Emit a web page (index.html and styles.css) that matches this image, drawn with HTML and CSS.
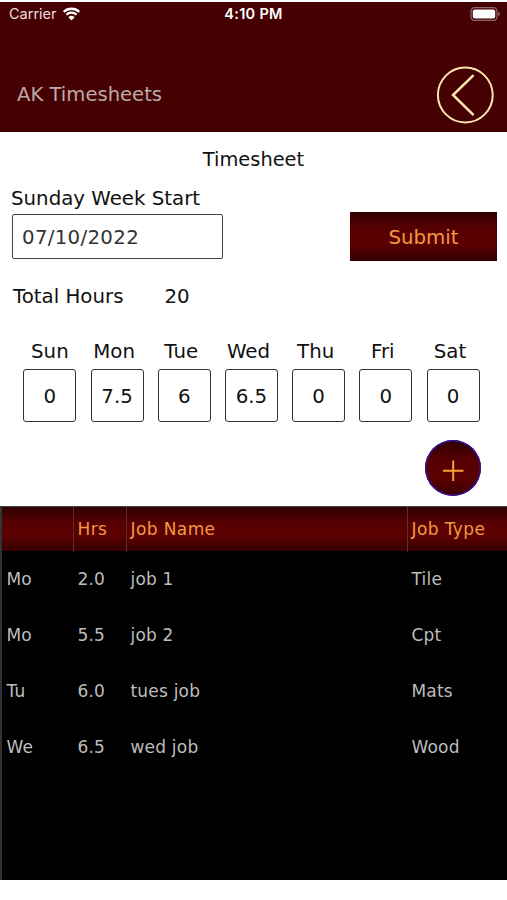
FILE: index.html
```html
<!DOCTYPE html>
<html lang="en">
	<head>
		<meta charset="utf-8">
		<title>AK Timesheets</title>
		<link rel="stylesheet" href="styles.css">
	</head>
	<body>

		<header class="header">
			<div class="status-bar">
				<div class="status-carrier">
					<span class="carrier-name">Carrier</span>
					<svg class="wifi-icon" width="19" height="14" viewBox="0 0 18 14">
						<path d="M1.2 4.9a11.2 11.2 0 0 1 15.6 0M3.9 7.8a7.3 7.3 0 0 1 10.2 0" fill="none" stroke="#fff" stroke-width="2.3"/>
						<path d="M5.9 10.2a4.5 4.5 0 0 1 6.2 0L9 13.4z" fill="#fff"/>
					</svg>
				</div>
				<span class="status-time">4:10 PM</span>
				<svg class="battery-icon" width="31" height="14" viewBox="0 0 31 14">
					<rect x="1" y=".7" width="26" height="12.6" rx="3.6" fill="none" stroke="#95696c" stroke-width="1.2"/>
					<rect x="2.8" y="2.5" width="22.4" height="9" rx="2" fill="#fff"/>
					<path d="M28.3 4.8v4.4c2.2-.8 2.2-3.6 0-4.4z" fill="#95696c"/>
				</svg>
			</div>
			<div class="title-bar">
				<h1 class="app-title">AK Timesheets</h1>
				<button class="back-button" type="button" aria-label="Back">
					<svg width="58" height="58" viewBox="0 0 58 58" fill="none" stroke="#ffe5ac">
						<circle cx="29.3" cy="29" r="27.4" stroke-width="2"/>
						<path d="M37.6 9.1L17 29l20.6 20.2" stroke-width="2.5"/>
					</svg>
				</button>
			</div>
		</header>

		<main class="timesheet">
			<h2 class="page-title">Timesheet</h2>

			<div class="week-row">
				<div class="week-field">
					<label class="week-label" for="week-start">Sunday Week Start</label>
					<input class="week-input" id="week-start" type="text" value="07/10/2022">
				</div>
				<button class="submit-button" type="button">Submit</button>
			</div>

			<div class="total-row">
				<span class="total-label">Total Hours</span>
				<span class="total-value">20</span>
			</div>

			<div class="days">
				<div class="day"><span class="day-name">Sun</span><div class="day-hours">0</div></div>
				<div class="day"><span class="day-name">Mon</span><div class="day-hours">7.5</div></div>
				<div class="day"><span class="day-name">Tue</span><div class="day-hours">6</div></div>
				<div class="day"><span class="day-name">Wed</span><div class="day-hours">6.5</div></div>
				<div class="day"><span class="day-name">Thu</span><div class="day-hours">0</div></div>
				<div class="day"><span class="day-name">Fri</span><div class="day-hours">0</div></div>
				<div class="day"><span class="day-name">Sat</span><div class="day-hours">0</div></div>
			</div>

			<div class="add-row">
				<button class="add-button" type="button" aria-label="Add job">
					<svg width="56" height="56" viewBox="0 0 56 56">
						<path d="M28.2 20.5v20.5M18 30.8h20.4" stroke="#f9a03c" stroke-width="2"/>
					</svg>
				</button>
			</div>
		</main>

		<section class="jobs">
			<div class="jobs-row jobs-head">
				<span></span>
				<span>Hrs</span>
				<span>Job Name</span>
				<span>Job Type</span>
			</div>
			<div class="jobs-row"><span>Mo</span><span>2.0</span><span>job 1</span><span>Tile</span></div>
			<div class="jobs-row"><span>Mo</span><span>5.5</span><span>job 2</span><span>Cpt</span></div>
			<div class="jobs-row"><span>Tu</span><span>6.0</span><span>tues job</span><span>Mats</span></div>
			<div class="jobs-row"><span>We</span><span>6.5</span><span>wed job</span><span>Wood</span></div>
		</section>

	</body>
</html>
```
FILE: styles.css
```css
* {
	box-sizing:				border-box;
}

body {
	background:				#fff;
	color:					#111;
	font-family:			Verdana, "DejaVu Sans", sans-serif;
	font-size:				19.8px;
	line-height:			24px;
	margin:					0;
	padding-top:			2px;
}

button {
	border:					none;
	font:					inherit;
	padding:				0;
}

/* Header */

.header {
	background:				#450002;
	height:					129.5px;
}

.status-bar {
	align-items:			center;
	color:					#fff;
	display:				grid;
	font-family:			Inter, sans-serif;
	font-size:				14.5px;
	grid-template-columns:	1fr auto 1fr;
	height:					23px;
	padding:				0 6px 0 9px;
}

.status-carrier {
	align-items:			center;
	color:					#ecdcdc;
	display:				flex;
	gap:					5px;
}

.status-time {
	font-weight:			600;
	letter-spacing:			0.3px;
	margin-right:			3px;
}

.battery-icon {
	justify-self:			end;
}

.title-bar {
	display:				flex;
	justify-content:		space-between;
	padding:				41px 13px 0 17px;
}

.app-title {
	color:					#bcaaa6;
	font-size:				19.6px;
	font-weight:			normal;
	margin:					17px 0 0;
}

.back-button {
	background:				none;
	height:					58px;
}

/* Timesheet form */

.timesheet {
	height:					374px;
	padding-top:			16px;
}

.page-title {
	font-size:				19.4px;
	font-weight:			normal;
	margin:					0;
	text-align:				center;
}

.week-row {
	align-items:			flex-end;
	display:				flex;
	justify-content:		space-between;
	padding:				15px 10px 0 11px;
}

.week-label {
	display:				block;
}

.week-input {
	border:					1.5px solid #444;
	border-radius:			2px;
	color:					#333;
	display:				block;
	font:					inherit;
	height:					45px;
	letter-spacing:			0.3px;
	margin:					3px 0 2px 1px;
	padding:				2px 9px 0;
	width:					211px;
}

.submit-button {
	background:				linear-gradient(#2e0001, #560001 32%, #5c0001 65%, #330001);
	color:					#f19a3e;
	height:					49px;
	padding-top:			3px;
	width:					147px;
}

.total-row {
	display:				flex;
	gap:					41px;
	padding:				24px 13px 0;
}

.days {
	display:				flex;
	gap:					14.2px;
	padding:				31px 23.4px 0;
}

.day {
	text-align:				center;
	width:					53px;
}

.day-name {
	display:				block;
}

.day + .day .day-name {
	margin-left:			-6px;
}

.day-hours {
	border:					1.5px solid #333;
	border-radius:			3px;
	height:					53px;
	line-height:			53px;
	margin-top:				5px;
}

.add-row {
	display:				flex;
	justify-content:		flex-end;
	padding:				18px 26px 0 0;
}

.add-button {
	background:				linear-gradient(#2e0001, #560001 35%, #5a0001 70%, #380001);
	border-radius:			50%;
	box-shadow:				inset 0 0 0 1.4px #3510a0;
	height:					56px;
	width:					56px;
}

/* Jobs list */

.jobs {
	background:				#000;
	border-left:			2px solid #333;
	color:					#bdbdbd;
	font-size:				17px;
	height:					374.5px;
	letter-spacing:			0.2px;
}

.jobs-row {
	align-items:			center;
	display:				grid;
	grid-template-columns:	71px 53px 281px 1fr;
	height:					56px;
}

.jobs-row span {
	padding-left:			4.5px;
}

.jobs-head {
	background:				linear-gradient(#2e0001, #560001 35%, #5c0001 65%, #360001);
	border-top:				1px solid #444;
	color:					#f19a3e;
	height:					45.5px;
	letter-spacing:			0.4px;
}

.jobs-head span {
	border-left:			1px solid #5e302c;
	height:					100%;
	line-height:			45px;
	padding-left:			3.5px;
}

.jobs-head span:first-child {
	border-left:			none;
}
```
